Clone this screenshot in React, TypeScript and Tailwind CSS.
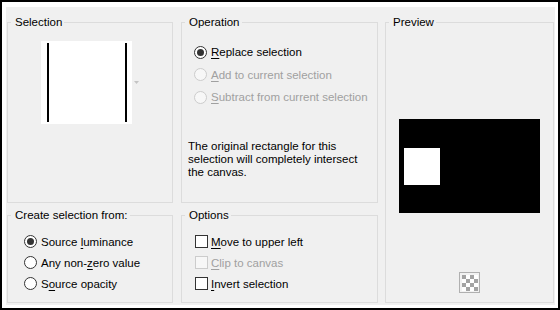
import type { ReactNode } from 'react';

const font = { fontFamily: '"Segoe UI", "Liberation Sans", Arial, sans-serif' };

function Group({ title, className, children }: { title: string; className?: string; children?: ReactNode }) {
  return (
    <fieldset className={`border border-[#dcdcdc] min-w-0 ${className ?? ''}`}>
      <legend className="ml-[3px] pl-[4px] pr-[2px] text-[11.5px] leading-[14px] text-black">{title}</legend>
      {children}
    </fieldset>
  );
}

function Radio({ checked = false, disabled = false, children }: { checked?: boolean; disabled?: boolean; children: ReactNode }) {
  return (
    <div className="flex items-center gap-[4px] h-[21px]">
      <div
        className={`w-[13px] h-[13px] rounded-full border flex items-center justify-center shrink-0 ${
          disabled ? 'border-[#cccccc] bg-[#f7f7f7]' : 'border-[#333333] bg-white'
        }`}
      >
        {checked && <div className="w-[7px] h-[7px] rounded-full bg-[#333333]" />}
      </div>
      <span className={`text-[11.5px] leading-[14px] whitespace-nowrap ${disabled ? 'text-[#a0a0a0]' : 'text-black'}`}>
        {children}
      </span>
    </div>
  );
}

function Check({ disabled = false, children }: { disabled?: boolean; children: ReactNode }) {
  return (
    <div className="flex items-center gap-[3px] h-[21px]">
      <div
        className={`w-[13px] h-[13px] border shrink-0 ${
          disabled ? 'border-[#cccccc] bg-[#f7f7f7]' : 'border-[#333333] bg-white'
        }`}
      />
      <span className={`text-[11.5px] leading-[14px] whitespace-nowrap ${disabled ? 'text-[#a0a0a0]' : 'text-black'}`}>
        {children}
      </span>
    </div>
  );
}

function Key({ children }: { children: ReactNode }) {
  return <u className="underline underline-offset-[2px]">{children}</u>;
}

function CheckerIcon() {
  const cells = [];
  for (let r = 0; r < 4; r++) {
    for (let c = 0; c < 4; c++) {
      cells.push(
        <rect key={`${r}-${c}`} x={3 + c * 4} y={3 + r * 4} width="4" height="4" fill={(r + c) % 2 === 0 ? '#a3a3a3' : '#ffffff'} />
      );
    }
  }
  return (
    <svg width="21" height="21" viewBox="0 0 21 21">
      <rect x="0.5" y="0.5" width="20" height="20" fill="#f2f2f2" stroke="#b0b0b0" />
      {cells}
    </svg>
  );
}

export default function App() {
  return (
    <div className="w-[560px] h-[310px] border-2 border-black bg-white pt-[5px] pl-[4px] pr-[3px] pb-[3px]" style={font}>
      <div className="h-full bg-[#f0f0f0] pt-[8px] pl-px pr-px pb-[2px] flex">
        {/* left column */}
        <div className="w-[166px] mr-[8px] flex flex-col gap-[5px]">
          <Group title="Selection" className="h-[188px]">
            <div className="mt-[12px] flex items-center justify-center gap-[2px]">
              <div className="w-[91px] h-[83px] bg-white flex justify-between pl-[6px] pr-[5px] py-[2px]">
                <div className="w-[2px] bg-black" />
                <div className="w-[2px] bg-black" />
              </div>
              <svg width="5" height="3" viewBox="0 0 5 3">
                <path d="M0 0 H5 L2.5 3 Z" fill="#c4c4c4" />
              </svg>
            </div>
          </Group>
          <Group title="Create selection from:" className="h-[95px]">
            <div className="mt-[9px] pl-[16px] flex flex-col">
              <Radio checked>
                Source <Key>l</Key>uminance
              </Radio>
              <Radio>
                Any non-<Key>z</Key>ero value
              </Radio>
              <Radio>
                S<Key>o</Key>urce opacity
              </Radio>
            </div>
          </Group>
        </div>

        {/* middle column */}
        <div className="w-[197px] mr-[7px] flex flex-col gap-[5px]">
          <Group title="Operation" className="h-[188px]">
            <div className="mt-[12px] pl-[12px] flex flex-col [&>div]:h-[22.5px]">
              <Radio checked>
                <Key>R</Key>eplace selection
              </Radio>
              <Radio disabled>
                <Key>A</Key>dd to current selection
              </Radio>
              <Radio disabled>
                <Key>S</Key>ubtract from current selection
              </Radio>
            </div>
            <p className="mt-[31px] pl-[6px] text-[11.5px] leading-[13px] text-black">
              The original rectangle for this
              <br />
              selection will completely intersect
              <br />
              the canvas.
            </p>
          </Group>
          <Group title="Options" className="h-[95px]">
            <div className="mt-[9px] pl-[13px] flex flex-col">
              <Check>
                <Key>M</Key>ove to upper left
              </Check>
              <Check disabled>
                <Key>C</Key>lip to canvas
              </Check>
              <Check>
                <Key>I</Key>nvert selection
              </Check>
            </div>
          </Group>
        </div>

        {/* preview */}
        <Group title="Preview" className="w-[169px] h-[288px]">
          <div className="flex flex-col items-center">
            <div className="mt-[90px] w-[141px] h-[94px] bg-black pl-[5px] pt-[29px]">
              <div className="w-[36px] h-[37px] bg-white" />
            </div>
            <div className="mt-[59px] flex">
              <CheckerIcon />
            </div>
          </div>
        </Group>
      </div>
    </div>
  );
}
